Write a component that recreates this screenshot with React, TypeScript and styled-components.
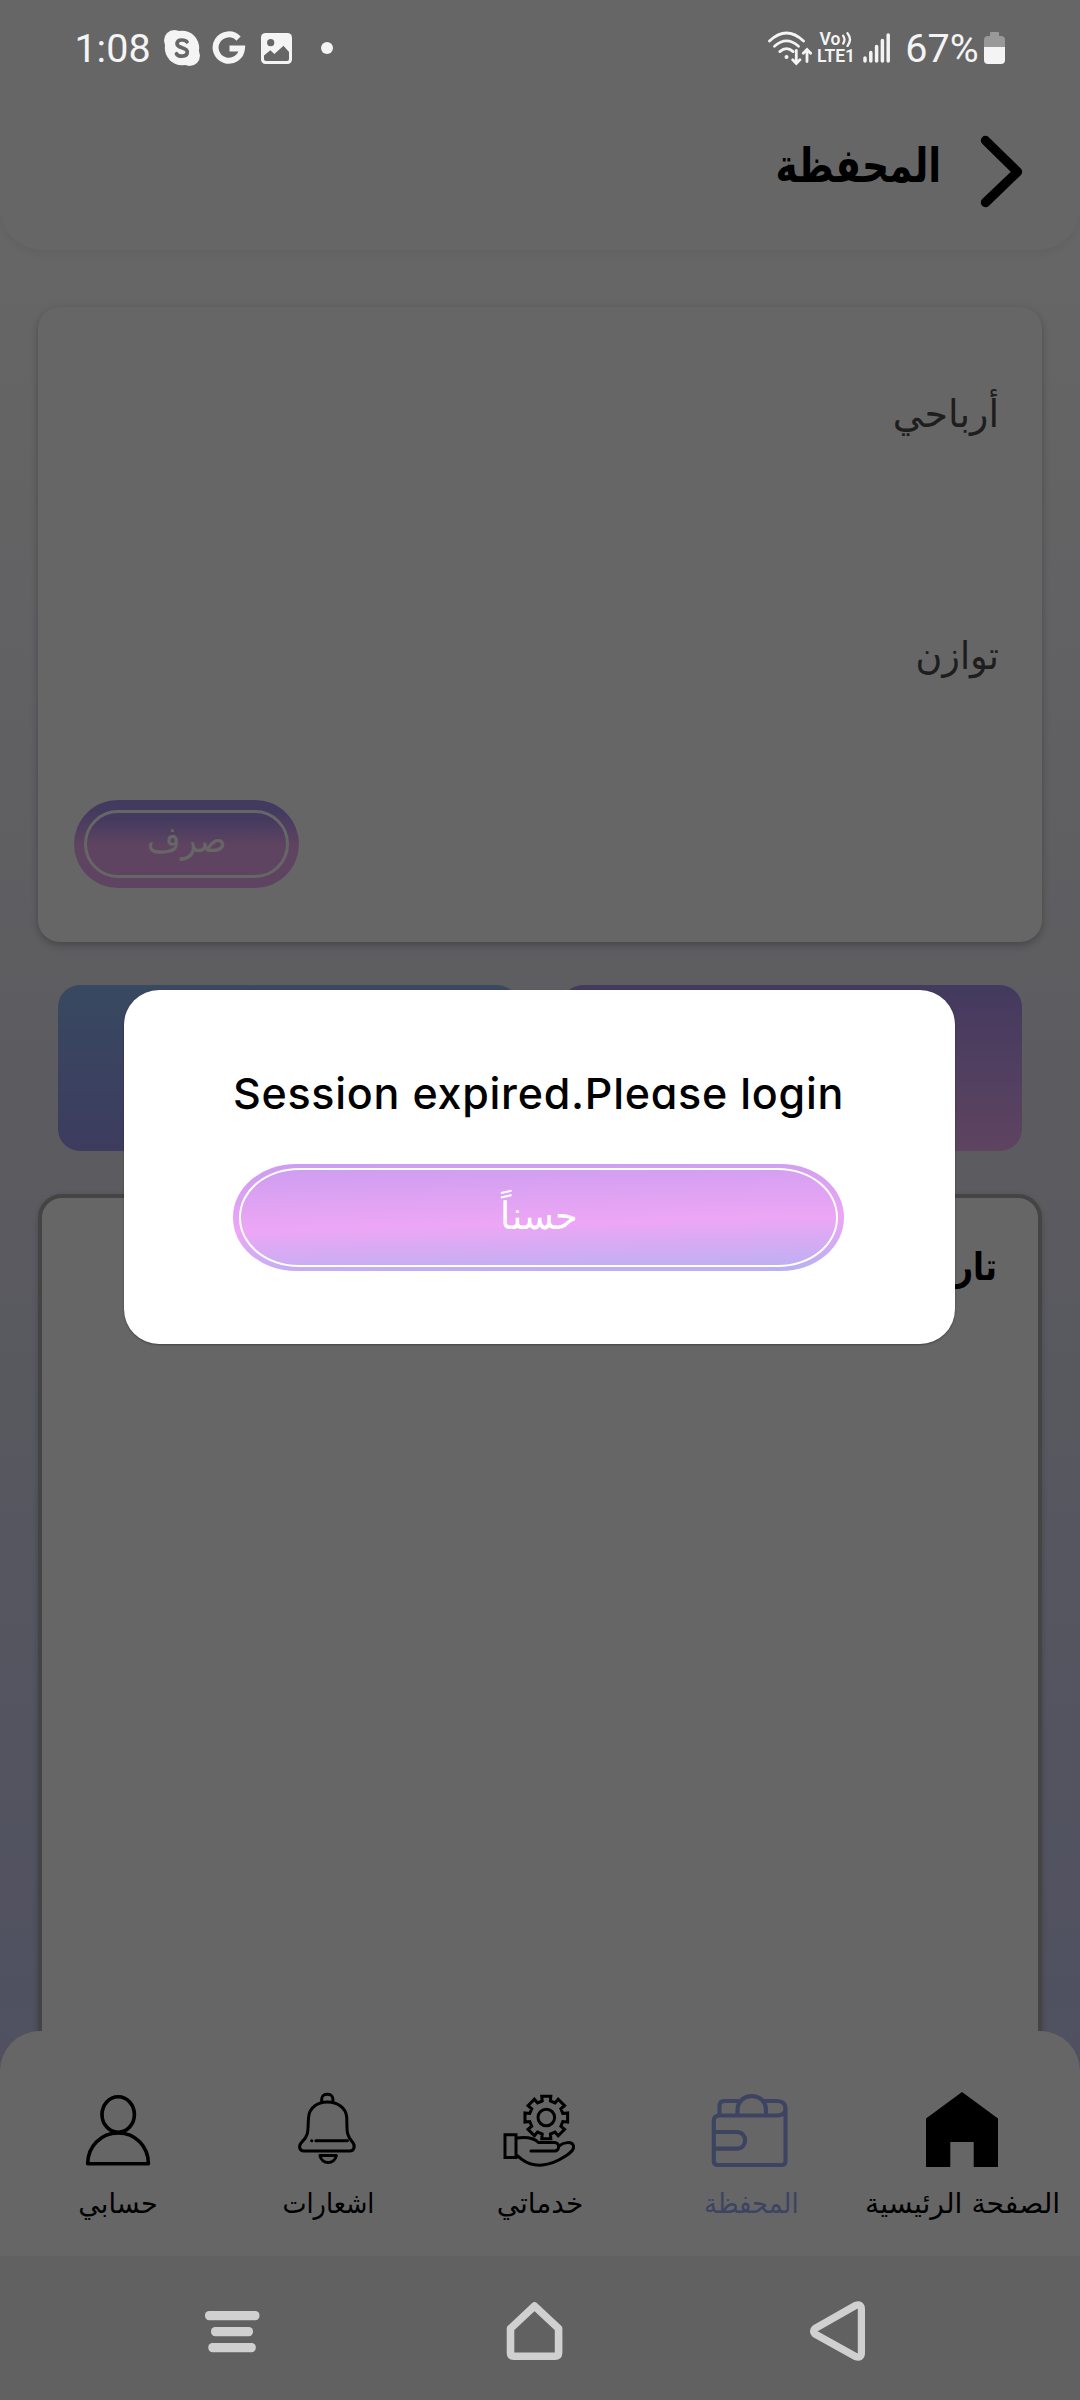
import React from "react";
import styled, { createGlobalStyle } from "styled-components";

const ARABIC = '"DejaVu Sans", sans-serif';

const GlobalStyle = createGlobalStyle`
  * { box-sizing: border-box; }
  html, body { margin: 0; padding: 0; }
`;

const Screen = styled.div`
  position: relative;
  width: 1080px;
  height: 2400px;
  overflow: hidden;
  display: flex;
  flex-direction: column;
  font-family: ${ARABIC};
  background: linear-gradient(180deg, #ffffff 250px, #f4f4f9 640px, #e9e9f2 1000px, #dcdcee 1400px, #c7c9f2 2060px, #c0c2f2 2256px);
`;

/* Arabic label: $size sets the height of the letters, $stretch their width */
const Label = styled.span<{ $size: number; $stretch?: number; $color?: string; $bold?: boolean; $origin?: string }>`
  display: inline-block;
  direction: rtl;
  white-space: nowrap;
  font-size: ${(p) => p.$size}px;
  line-height: 60px;
  font-weight: ${(p) => (p.$bold ? 700 : 400)};
  color: ${(p) => p.$color ?? "#000"};
  transform: scaleX(${(p) => p.$stretch ?? 1});
  transform-origin: ${(p) => p.$origin ?? "right"} center;
`;

const Header = styled.header`
  height: 250px;
  flex: none;
  padding: 96px 55px 0 0;
  display: flex;
  justify-content: flex-end;
  align-items: center;
  background: #fff;
  border-radius: 0 0 42px 42px;
  box-shadow: 0 4px 10px rgba(0, 0, 0, 0.06);
  svg { margin-bottom: 2px; }
`;

const HeaderTitle = styled.div`
  margin: -14px 38px 0 0;
`;

const Content = styled.main`
  flex: none;
  height: 1781px;
  overflow: hidden;
  padding: 57px 38px 0;
  display: flex;
  flex-direction: column;
`;

const BalanceCard = styled.section`
  flex: none;
  height: 635px;
  padding: 77px 43px 0 36px;
  display: flex;
  flex-direction: column;
  align-items: flex-end;
  border-radius: 22px;
  background: #fff;
  box-shadow: 0 3px 8px rgba(0, 0, 0, 0.26);
`;

const BalanceRow = styled.div`
  height: 242px;
`;

const CashButton = styled.button`
  align-self: flex-start;
  margin-top: -68px;
  width: 225px;
  height: 88px;
  padding: 10px;
  display: flex;
  border: 0;
  border-radius: 44px;
  background: linear-gradient(180deg, #a891ee 12%, #ebaaf0 52%);
`;

const CashFrame = styled.span`
  flex: 1;
  display: flex;
  align-items: center;
  justify-content: center;
  padding-bottom: 8px;
  border: 3px solid #fff;
  border-radius: 34px;
  background: linear-gradient(180deg, #a891ee 12%, #ebaaf0 52%) border-box;
`;

const Tiles = styled.div`
  flex: none;
  margin: 43px 20px;
  display: grid;
  grid-template-columns: 1fr 1fr;
  gap: 42px;
`;

const Tile = styled.div<{ $from: string; $to: string }>`
  height: 166px;
  border-radius: 22px;
  background: linear-gradient(180deg, ${(p) => p.$from}, ${(p) => p.$to});
`;

const HistoryCard = styled.section`
  flex: none;
  height: 900px;
  padding: 39px 41px;
  display: flex;
  align-items: flex-start;
  justify-content: flex-end;
  border: 4px solid #aaa;
  border-radius: 24px;
  background: #fff;
  box-shadow: 0 2px 6px rgba(0, 0, 0, 0.2);
`;

const TabBar = styled.nav`
  flex: none;
  height: 225px;
  padding: 56px 12px 0;
  display: grid;
  grid-template-columns: repeat(5, 1fr);
  border-radius: 40px 40px 0 0;
  background: #fff;
`;

const Tab = styled.div`
  min-width: 0;
  display: flex;
  flex-direction: column;
  align-items: center;
  gap: 7px;
  svg { flex: none; display: block; overflow: visible; }
`;

const Scrim = styled.div`
  position: absolute;
  inset: 0;
  display: flex;
  align-items: flex-start;
  justify-content: center;
  padding: 990px 1px 0 0;
  background: rgba(0, 0, 0, 0.6);
`;

const Dialog = styled.div`
  width: 831px;
  height: 354px;
  padding: 68px 2px 0 0;
  display: flex;
  flex-direction: column;
  align-items: center;
  border-radius: 35px;
  background: #fff;
  box-shadow: 0 1px 2px rgba(0, 0, 0, 0.35);
`;

const Message = styled.p`
  margin: 0 0 36px;
  line-height: 70px;
  white-space: nowrap;
  font-family: Inter, sans-serif;
  font-weight: 500;
  font-size: 43px;
  letter-spacing: 0.75px;
  font-feature-settings: "cv11" 1, "ss03" 1;
  color: #000;
`;

const OkButton = styled.button`
  width: 611px;
  height: 107px;
  padding: 4px 6px;
  display: flex;
  border: 0;
  border-radius: 63px / 53px;
  background: linear-gradient(178.6deg, #cb9df0 0%, #eda6f5 55%, #b8b1f2 100%);
`;

const OkFrame = styled.span`
  flex: 1;
  display: flex;
  align-items: center;
  justify-content: center;
  padding-bottom: 3px;
  border: 2.5px solid #fff;
  border-radius: 60px / 49px;
`;

const StatusBar = styled.div`
  position: absolute;
  inset: 0 0 auto;
  height: 96px;
  padding: 0 75px;
  display: flex;
  align-items: center;
  color: #f4f4f4;
  font-family: Roboto, sans-serif;
  font-size: 39.5px;
  svg { flex: none; display: block; }
`;

/* One status bar entry with the space that precedes it */
const StatusItem = styled.div<{ $before: number; $width?: number }>`
  flex: none;
  margin-left: ${(p) => p.$before}px;
  width: ${(p) => (p.$width ? `${p.$width}px` : "auto")};
  display: flex;
  justify-content: center;
  white-space: nowrap;
`;

const Lte = styled.div`
  height: 32px;
  display: flex;
  flex-direction: column;
  align-items: center;
  justify-content: space-between;
  font-size: 17.5px;
  line-height: 15px;
  font-weight: 600;
`;

const VoRow = styled.div`
  display: flex;
  align-items: center;
  gap: 2px;
`;

const SystemBar = styled.div`
  flex: none;
  height: 144px;
  background: #f2f2f2;
`;

const SystemKeys = styled.div`
  position: absolute;
  inset: auto 0 0;
  height: 144px;
  padding: 6px 211px 0 201px;
  display: flex;
  align-items: center;
  justify-content: space-between;
  svg { display: block; }
`;

const Chevron = () => (
  <svg width="46" height="76" viewBox="979 134 46 76" fill="none">
    <path d="M985.5 140.5L1017.5 171.8L985.5 202.5" stroke="#000" strokeWidth="9.4" strokeLinecap="round" strokeLinejoin="round" />
  </svg>
);

const SkypeIcon = () => (
  <svg width="38" height="38" viewBox="0 0 38 38">
    <circle cx="19" cy="19" r="17.2" fill="#f4f4f4" />
    <circle cx="11.5" cy="11.5" r="10.5" fill="#f4f4f4" />
    <circle cx="26.5" cy="26.5" r="10.5" fill="#f4f4f4" />
    <path d="M24 12.8C22.5 10.8 14.5 9.4 14 14.5C13.8 19.8 24.4 17.8 24.3 23.2C24 28.6 15 27.8 13.5 24.8" stroke="#666" strokeWidth="3.7" fill="none" strokeLinecap="round" />
  </svg>
);

const GoogleIcon = () => (
  <svg width="34" height="34" viewBox="0 0 34 34" fill="none">
    <path d="M26.500 7.600A13.200 13.200 0 1 0 30 17.400H17.500" stroke="#f4f4f4" strokeWidth="6" />
  </svg>
);

const PictureIcon = () => (
  <svg width="31" height="31" viewBox="0 0 31 31">
    <rect width="31" height="31" rx="4.5" fill="#f4f4f4" />
    <circle cx="9.7" cy="9.7" r="3.6" fill="#666" />
    <path d="M3 22.5L9.3 17.2L13.4 21L22.5 12.8L28 19V26Q28 28 26 28H5Q3 28 3 26Z" fill="#666" />
  </svg>
);

const Dot = () => (
  <svg width="12" height="12" viewBox="0 0 12 12">
    <circle cx="6" cy="6" r="6" fill="#f4f4f4" />
  </svg>
);

const WifiIcon = () => (
  <svg width="44" height="35" viewBox="0 0 44 35" fill="none" stroke="#f4f4f4" strokeWidth="2.8" strokeLinecap="round">
    <path d="M1.5 10Q18.5 -6 35.5 10" />
    <path d="M6.5 15.3Q18.5 4.5 30.5 15.3" />
    <path d="M11.8 20.6Q18.5 14.6 25.2 20.6" />
    <circle cx="18.5" cy="26" r="2" fill="#f4f4f4" stroke="none" />
    <path d="M28.3 19.5V32M24.7 28.8L28.3 32.4L31.9 28.8M39 30.5V19M35.3 22.3L39 18.6L42.7 22.3" />
  </svg>
);

const WaveIcon = () => (
  <svg width="10" height="15" viewBox="0 0 10 15" fill="none" stroke="#f4f4f4" strokeWidth="2.3" strokeLinecap="round">
    <path d="M1.200 3.800Q3.800 7.500 1.200 11.500M5.500 1.200Q10.500 7.500 5.500 14" />
  </svg>
);

const SignalIcon = () => (
  <svg width="28" height="32" viewBox="0 0 28 32" stroke="#f4f4f4" strokeWidth="3.5" strokeLinecap="round">
    <path d="M2 26V29M7.8 20.5V29M13.6 14.5V29M19.4 8.5V29M25.2 3V29" />
  </svg>
);

const BatteryIcon = () => (
  <svg width="21" height="32" viewBox="0 0 21 32">
    <path d="M6 1Q6 0 7 0H14Q15 0 15 1V4H17Q21 4 21 8V15H0V8Q0 4 4 4H6Z" fill="#999" />
    <path d="M0 15H21V28Q21 32 17 32H4Q0 32 0 28Z" fill="#f4f4f4" />
  </svg>
);

/* Tab icons share an 80px square, drawn from y = 2087 */
const PersonIcon = () => (
  <svg width="80" height="80" viewBox="77.8 2087 80 80" fill="none" stroke="#000" strokeWidth="3.6" strokeLinejoin="round">
    <ellipse cx="118" cy="2114.5" rx="16.2" ry="17.8" />
    <path d="M87.5 2163.8H148.2C148.2 2146 135 2133 118 2133S87.5 2146 87.5 2163.8Z" />
  </svg>
);

const BellIcon = () => (
  <svg width="80" height="80" viewBox="288.6 2087 80 80" fill="none" stroke="#000" strokeWidth="3" strokeLinejoin="round" strokeLinecap="round">
    <path d="M321.3 2101V2099C321.3 2092.7 332.5 2092.7 332.5 2099V2101" />
    <path d="M301.5 2142C309.5 2135 307 2128 308.2 2117C309 2107.500 317 2102 327 2102S345.500 2107.500 346.300 2117C347 2128 345 2135 352 2142C355.500 2146 353.500 2151 349.500 2151H303.700C299 2151 297.500 2146 301.500 2142Z" />
    <path d="M315.500 2140.800H347M311.200 2140.800H311.400" />
    <path d="M319.500 2155.500H336C334 2164.800 321.500 2164.800 319.500 2155.500Z" />
  </svg>
);

const teeth = Array.from({ length: 8 }, (_, i) => {
  const point = (r: number, deg: number) => {
    const a = ((deg + i * 45) * Math.PI) / 180;
    return `${(546.3 + r * Math.cos(a)).toFixed(2)} ${(2117.5 + r * Math.sin(a)).toFixed(2)}`;
  };
  return `${i ? "L" : "M"}${point(17, -14)}L${point(21.8, -12)}L${point(21.8, 12)}L${point(17, 14)}`;
}).join("");

const ServiceIcon = () => (
  <svg width="80" height="80" viewBox="500 2087 80 80" fill="none" stroke="#000" strokeWidth="3" strokeLinejoin="miter" strokeLinecap="round">
    <path d={`${teeth}Z`} />
    <circle cx="546.3" cy="2117.500" r="8.300" />
    <path d="M505 2134.800H516V2157.600H505Z" />
    <path d="M517 2138C524 2137 533 2137 538.500 2142.500H554.500C560 2142.500 560 2151 554.500 2151H531" />
    <path d="M559 2146C564 2142 572 2141 573.500 2146C574.500 2150 570 2153.500 564 2157C550 2166 534 2168.500 522 2159.500L517 2155.500" />
  </svg>
);

const ACTIVE = "#98abf6";

const WalletIcon = () => (
  <svg width="80" height="80" viewBox="711 2087 80 80" fill="none" stroke={ACTIVE} strokeWidth="4.2" strokeLinejoin="round">
    <path d="M719.500 2115V2106Q719.500 2101 724.500 2101H739M763 2101H777Q785.500 2101 785.500 2109V2161Q785.500 2165 781.500 2165H718Q713.800 2165 713.800 2161V2121Q713.800 2115.500 719.500 2115.500H777Q785.500 2115.500 785.500 2108.500" />
    <path d="M737.500 2115V2110C737.500 2091.500 766 2091.500 766 2110V2115" />
    <path d="M714 2132H736.500C748 2132 748 2148.700 736.500 2148.700H714" />
  </svg>
);

const HomeIcon = () => (
  <svg width="80" height="80" viewBox="922 2087 80 80">
    <path d="M962 2092L998 2118.500V2167H973.700V2142H950.300V2167H926V2118.500Z" fill="#000" />
  </svg>
);

const tabs = [
  { label: "حسابي", icon: <PersonIcon />, stretch: 0.97 },
  { label: "اشعارات", icon: <BellIcon />, stretch: 0.91 },
  { label: "خدماتي", icon: <ServiceIcon />, stretch: 1 },
  { label: "المحفظة", icon: <WalletIcon />, stretch: 0.92, color: ACTIVE },
  { label: "الصفحة الرئيسية", icon: <HomeIcon />, stretch: 1.01 },
];

export default function App() {
  return (
    <>
      <GlobalStyle />
      <Screen>
        <Header>
          <HeaderTitle>
            <Label $size={47} $bold $stretch={0.8}>المحفظة</Label>
          </HeaderTitle>
          <Chevron />
        </Header>
        <Content>
          <BalanceCard>
            <BalanceRow><Label $size={38} $color="#4d4d4d">أرباحي</Label></BalanceRow>
            <BalanceRow><Label $size={38} $color="#4d4d4d" $stretch={0.96}>توازن</Label></BalanceRow>
            <CashButton>
              <CashFrame><Label $size={36} $color="#fff" $stretch={0.9} $origin="center">صرف</Label></CashFrame>
            </CashButton>
          </BalanceCard>
          <Tiles>
            <Tile $from="#8cb6f0" $to="#9896ee" />
            <Tile $from="#a791ec" $to="#ebaaf2" />
          </Tiles>
          <HistoryCard>
            <Label $size={38} $bold $stretch={0.84}>تاريخ</Label>
          </HistoryCard>
        </Content>
        <TabBar>
          {tabs.map((t) => (
            <Tab key={t.label}>
              {t.icon}
              <Label $size={28} $color={t.color} $stretch={t.stretch} $origin="center">{t.label}</Label>
            </Tab>
          ))}
        </TabBar>
        <SystemBar />
        <Scrim>
          <Dialog>
            <Message>Session expired.Please login</Message>
            <OkButton>
              <OkFrame><Label $size={38} $color="#fff" $stretch={0.965} $origin="center">حسناً</Label></OkFrame>
            </OkButton>
          </Dialog>
        </Scrim>
        <StatusBar>
          <StatusItem $before={0} $width={75}>1:08</StatusItem>
          <StatusItem $before={13}><SkypeIcon /></StatusItem>
          <StatusItem $before={11}><GoogleIcon /></StatusItem>
          <StatusItem $before={15}><PictureIcon /></StatusItem>
          <StatusItem $before={29}><Dot /></StatusItem>
          <StatusItem $before={435}><WifiIcon /></StatusItem>
          <StatusItem $before={5} $width={38}>
            <Lte>
              <VoRow>Vo<WaveIcon /></VoRow>
              <div>LTE1</div>
            </Lte>
          </StatusItem>
          <StatusItem $before={8}><SignalIcon /></StatusItem>
          <StatusItem $before={12} $width={78}>67%</StatusItem>
          <StatusItem $before={3}><BatteryIcon /></StatusItem>
        </StatusBar>
        <SystemKeys>
          <svg width="62" height="62" viewBox="201 2300 62 62" fill="#d0d0d0">
            <rect x="205" y="2311" width="54.500" height="9.200" rx="4.200" />
            <rect x="211" y="2327" width="42" height="9.200" rx="4.200" />
            <rect x="208.300" y="2343" width="47.500" height="9.200" rx="4.200" />
          </svg>
          <svg width="62" height="62" viewBox="504 2300 62 62" fill="none" stroke="#d0d0d0" strokeWidth="7.600" strokeLinejoin="round">
            <path d="M534.500 2306L558.600 2328.500V2352.500Q558.600 2356.200 555 2356.200H514Q510.500 2356.200 510.500 2352.500V2328.500Z" />
          </svg>
          <svg width="62" height="62" viewBox="807 2300 62 62" fill="none" stroke="#d0d0d0" strokeWidth="7.200" strokeLinejoin="round">
            <path d="M815 2328.500L855.500 2305.500Q861.400 2303.500 861.400 2309V2353Q861.400 2358.500 855.500 2356.500L815 2334Q812 2331.200 815 2328.500Z" />
          </svg>
        </SystemKeys>
      </Screen>
    </>
  );
}
